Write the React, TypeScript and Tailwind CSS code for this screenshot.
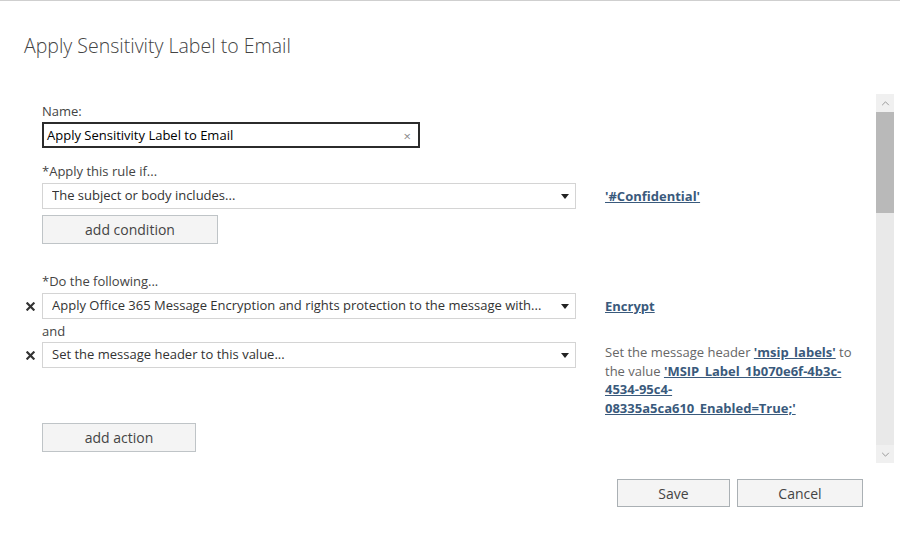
import React from 'react';

const font = { fontFamily: '"Segoe UI", "Open Sans", "Liberation Sans", sans-serif' };

const Caret = () => (
  <svg viewBox="0 0 8 5" className="w-[8px] h-[5px]" aria-hidden="true">
    <path d="M0 0h8L4 5z" fill="#222" />
  </svg>
);

const DeleteX = () => (
  <svg viewBox="0 0 10 10" className="w-[9px] h-[9px]" aria-hidden="true">
    <path d="M1.5 1.5l7 7M8.5 1.5l-7 7" stroke="#333" strokeWidth="2.4" strokeLinecap="square" />
  </svg>
);

const Select = ({ value }: { value: string }) => (
  <div className="w-[534px] h-[26px] border border-[#d4d4d4] bg-white flex items-center pl-[9px] pr-[6px]">
    <span className="flex-1 truncate text-[13px] text-[#333]">{value}</span>
    <Caret />
  </div>
);

const Link = ({ children }: { children: React.ReactNode }) => (
  <span className="font-bold underline text-[#3a5a7c]">{children}</span>
);

const GrayButton = ({ label, width }: { label: string; width: string }) => (
  <button
    type="button"
    className={`${width} h-[29px] border border-[#bfc4c7] bg-[#f4f4f4] text-[14px] text-[#444]`}
  >
    {label}
  </button>
);

export default function App() {
  return (
    <div className="w-[900px] h-[545px] bg-white border-t border-[#cfcfcf] overflow-hidden flex flex-col" style={font}>
      <h1 className="pl-[24px] pt-[31px] text-[19.5px] font-light text-[#444] leading-[28px]">
        Apply Sensitivity Label to Email
      </h1>

      <div className="mt-[34px] h-[369px] flex">
        {/* contenu défilant */}
        <div className="flex-1 pt-[8px]">
          <div className="pl-[42px] text-[13px] text-[#444] leading-[18px]">Name:</div>
          <div className="pl-[42px] mt-[2px]">
            <div className="w-[378px] h-[26px] border-2 border-[#2b2b2b] flex items-center pl-[3px] pr-[7px] pt-[2px]">
              <span className="flex-1 text-[13px] text-black">Apply Sensitivity Label to Email</span>
              <span className="text-[13px] text-[#888] leading-none">×</span>
            </div>
          </div>

          <div className="pl-[42px] mt-[14px] text-[13px] text-[#444] leading-[18px]">*Apply this rule if...</div>
          <div className="flex mt-[3px]">
            <div className="w-[42px]" />
            <Select value="The subject or body includes..." />
            <div className="ml-[29px] text-[13px] leading-[26px]">
              <Link>'#Confidential'</Link>
            </div>
          </div>
          <div className="pl-[42px] mt-[6px]">
            <GrayButton label="add condition" width="w-[176px]" />
          </div>

          <div className="pl-[42px] mt-[28px] text-[13px] text-[#444] leading-[18px]">*Do the following...</div>
          <div className="flex mt-[3px]">
            <div className="w-[42px] flex items-center justify-end pr-[7px]">
              <DeleteX />
            </div>
            <Select value="Apply Office 365 Message Encryption and rights protection to the message with..." />
            <div className="ml-[29px] text-[13px] leading-[26px]">
              <Link>Encrypt</Link>
            </div>
          </div>
          <div className="pl-[42px] mt-[3px] text-[13px] text-[#444] leading-[18px]">and</div>
          <div className="flex mt-[2px] items-start">
            <div className="w-[42px] h-[26px] flex items-center justify-end pr-[7px]">
              <DeleteX />
            </div>
            <Select value="Set the message header to this value..." />
            <div className="ml-[29px] w-[252px] text-[13px] leading-[18.5px] text-[#666] pt-[1px]">
              <div>
                Set the message header <Link>'msip_labels'</Link> to
              </div>
              <div>
                the value <Link>'MSIP_Label_1b070e6f-4b3c-</Link>
              </div>
              <div>
                <Link>4534-95c4-</Link>
              </div>
              <div>
                <Link>08335a5ca610_Enabled=True;'</Link>
              </div>
            </div>
          </div>
          <div className="pl-[42px] mt-[6px]">
            <GrayButton label="add action" width="w-[154px]" />
          </div>
        </div>

        {/* barre de défilement */}
        <div className="w-[18px] mr-[6px] bg-[#e9e9e9] flex flex-col">
          <div className="h-[18px] bg-[#f0f0f0] flex items-center justify-center">
            <svg viewBox="0 0 10 6" className="w-[9px] h-[5px]" aria-hidden="true">
              <path d="M1 5l4-4 4 4" fill="none" stroke="#888" strokeWidth="1" />
            </svg>
          </div>
          <div className="h-[101px] bg-[#b9b9b9]" />
          <div className="flex-1" />
          <div className="h-[18px] bg-[#f0f0f0] flex items-center justify-center">
            <svg viewBox="0 0 10 6" className="w-[9px] h-[5px]" aria-hidden="true">
              <path d="M1 1l4 4 4-4" fill="none" stroke="#888" strokeWidth="1" />
            </svg>
          </div>
        </div>
      </div>

      <div className="mt-[16px] flex justify-end gap-[7px] pr-[37px]">
        <button type="button" className="w-[113px] h-[28px] border border-[#aab0b4] bg-[#f4f4f4] text-[14px] text-[#444]">
          Save
        </button>
        <button type="button" className="w-[126px] h-[28px] border border-[#aab0b4] bg-[#f4f4f4] text-[14px] text-[#444]">
          Cancel
        </button>
      </div>
    </div>
  );
}
